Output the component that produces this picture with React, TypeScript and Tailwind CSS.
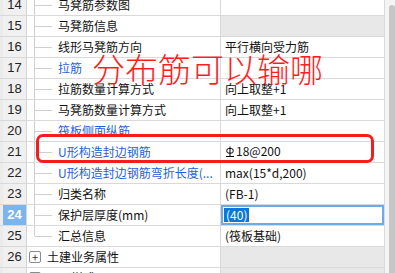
import React from "react";

type Row = {
  n: number;
  name: string;
  value?: React.ReactNode;
  blue?: boolean;
  grayVal?: boolean;
  last?: boolean;
  group?: boolean;
  selected?: boolean;
};

const Steel = () => (
  <svg width="10" height="12" viewBox="0 0 10 12" className="inline-block mr-[1px] -mb-[1px]">
    <rect x="1.8" y="2.5" width="6.4" height="4.6" rx="2" fill="none" stroke="#000" strokeWidth="1" />
    <line x1="5" y1="0.5" x2="5" y2="10.5" stroke="#000" strokeWidth="1" />
    <line x1="1" y1="10.5" x2="9" y2="10.5" stroke="#000" strokeWidth="1" />
  </svg>
);

const rows: Row[] = [
  { n: 14, name: "马凳筋参数图" },
  { n: 15, name: "马凳筋信息", grayVal: true },
  { n: 16, name: "线形马凳筋方向", value: "平行横向受力筋" },
  { n: 17, name: "拉筋", blue: true },
  { n: 18, name: "拉筋数量计算方式", value: "向上取整+1" },
  { n: 19, name: "马凳筋数量计算方式", value: "向上取整+1" },
  { n: 20, name: "筏板侧面纵筋", blue: true },
  {
    n: 21,
    name: "U形构造封边钢筋",
    blue: true,
    value: (
      <span className="inline-flex items-center">
        <Steel />
        18@200
      </span>
    ),
  },
  { n: 22, name: "U形构造封边钢筋弯折长度(...", blue: true, value: "max(15*d,200)" },
  { n: 23, name: "归类名称", value: "(FB-1)" },
  { n: 24, name: "保护层厚度(mm)", selected: true },
  { n: 25, name: "汇总信息", value: "(筏板基础)", last: true },
  { n: 26, name: "土建业务属性", group: true, grayVal: true },
  { n: 27, name: "显示样式", group: true, grayVal: true },
];

const font = { fontFamily: '"Noto Sans CJK SC", "Noto Sans", sans-serif' };

export default function App() {
  return (
    <div className="relative w-[395px] h-[273px] overflow-hidden bg-white" style={font}>
      <div className="flex">
        <div className="flex flex-col w-[385px] -mt-[5px]">
          {rows.map((r) => (
            <div key={r.n} className="flex h-[21px] border-b border-[#d9d9d9]">
              <div className="w-[3px] bg-[#ebebeb]" />
              <div
                className={
                  "w-[24px] border-r border-[#d4d4d4] flex items-center justify-center text-[13px] " +
                  (r.selected ? "bg-[#7cb4ee] text-white font-bold" : "bg-[#f0f0f0] text-[#222]")
                }
                style={{ fontFamily: '"Liberation Sans", sans-serif' }}
              >
                {r.n}
              </div>
              <div className="w-[194px] border-r border-[#d9d9d9] flex items-center overflow-hidden">
                {r.group ? (
                  <>
                    <div className="ml-[2px] w-[12px] h-[12px] border border-[#8a8a8a] rounded-[2px] flex items-center justify-center text-[11px] leading-none text-[#333]">
                      +
                    </div>
                    <span className="ml-[6px] text-[12px] text-[#111] whitespace-nowrap">{r.name}</span>
                  </>
                ) : (
                  <>
                    <div className="ml-[7px] w-[1px] h-full flex flex-col">
                      <div className="h-1/2 bg-[#cfcfcf]" />
                      <div className={"h-1/2 " + (r.last ? "" : "bg-[#cfcfcf]")} />
                    </div>
                    <div className="w-[17px] h-[1px] bg-[#cfcfcf]" />
                    <span
                      className={
                        "ml-[6px] text-[12px] whitespace-nowrap overflow-hidden flex-1 " +
                        (r.blue ? "text-[#1f5fd8]" : "text-[#111]")
                      }
                    >
                      {r.name}
                    </span>
                  </>
                )}
              </div>
              <div
                className={
                  "w-[164px] border-r border-[#d9d9d9] flex items-center text-[12px] text-[#111] whitespace-nowrap " +
                  (r.grayVal ? "bg-[#e8e8e8]" : "bg-white")
                }
              >
                {r.selected ? (
                  <div className="w-full h-full border-2 border-[#6eaae6] flex items-center pl-[1px]">
                    <span className="bg-[#0a78d6] text-white px-[2px] leading-[14px]">(40)</span>
                  </div>
                ) : (
                  <span className="pl-[4px]">{r.value}</span>
                )}
              </div>
            </div>
          ))}
        </div>
        <div className="w-[10px] h-[273px] bg-[#f4f4f4] flex justify-end pt-[5px]">
          <div className="w-[6px] h-full bg-[#c6c6c6] rounded-t-[3px]" />
        </div>
      </div>

      {/* red annotation box */}
      <div className="absolute left-[36px] top-[134px] w-[338px] h-[29px] border-[3px] border-[#f21d1d] rounded-[7px]" />

      {/* red annotation text */}
      <div
        className="absolute left-[92px] top-[52px] text-[33px] leading-none text-[#ff1e1e] font-light whitespace-nowrap"
        style={font}
      >
        分布筋可以输哪
      </div>
    </div>
  );
}
